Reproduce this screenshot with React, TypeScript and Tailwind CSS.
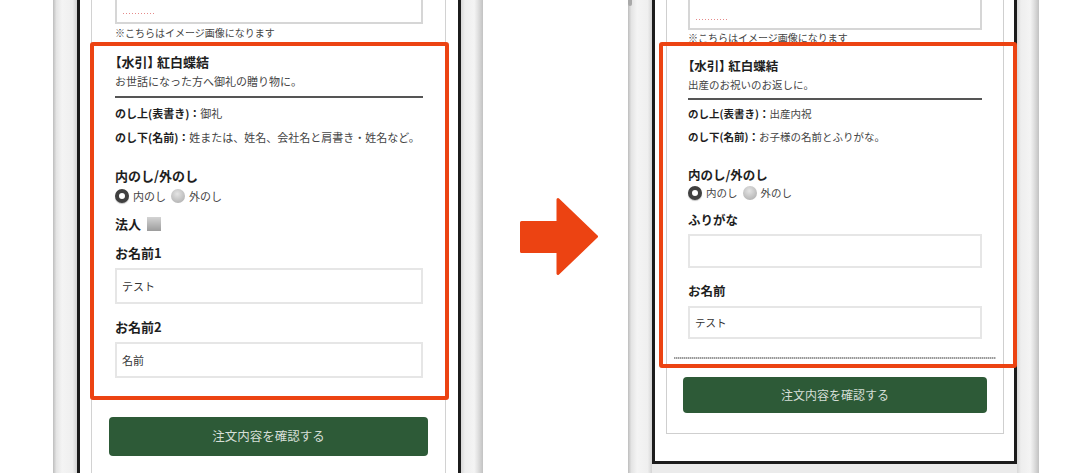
import React from "react";

const RED = "border-[#ec4312]";

function Radio({ checked }: { checked?: boolean }) {
  return checked ? (
    <span className="box-border inline-block h-[14px] w-[14px] shrink-0 rounded-full border-[4px] border-[#404040] bg-white shadow-[0_1px_1px_rgba(0,0,0,0.25)]" />
  ) : (
    <span className="inline-block h-[14px] w-[14px] shrink-0 rounded-full bg-[radial-gradient(circle_at_45%_35%,#e4e4e4,#a8a8a8)]" />
  );
}

function RadioRow({ size }: { size: string }) {
  return (
    <div className={`flex h-[16px] items-center gap-[4px] leading-[16px] text-[#444] ${size}`}>
      <Radio checked />
      <span className="mr-[1px]">内のし</span>
      <Radio />
      <span>外のし</span>
    </div>
  );
}

function Field({ value, h }: { value?: string; h: string }) {
  return (
    <div className={`flex items-center border-2 border-[#e6e6e6] bg-white pl-[5px] text-[#333] ${h}`}>
      {value}
    </div>
  );
}

function SideBezel({ side, knob }: { side: "l" | "r"; knob?: boolean }) {
  return side === "l" ? (
    <div className="relative h-full w-[24px] shrink-0 bg-[linear-gradient(to_right,#bdbdbd,#e4e4e4_14%,#f4f4f4_38%,#efefef_82%,#d4d4d4)]">
      {knob && <div className="absolute left-0 top-0 h-[6px] w-[4px] rounded-b-[2px] bg-[#a9a9a9]" />}
    </div>
  ) : (
    <div className="h-full w-[22px] shrink-0 bg-[linear-gradient(to_right,#d8d8d8,#eeeeee_18%,#f4f4f4_60%,#e2e2e2_76%,#c2c2c2)]" />
  );
}

// small pink dotted stroke shown inside the preview image frame
function PinkDots({ w }: { w: string }) {
  return <div className={`h-[1px] bg-[repeating-linear-gradient(to_right,#e58a8a_0_1px,transparent_1px_3px)] ${w}`} />;
}

function LeftPhone() {
  return (
    <div className="ml-[53px] flex h-[473px] w-[430px] shrink-0 items-start">
      <SideBezel side="l" />
      <div className="relative h-[520px] w-[384px] shrink-0 border-x-[3px] border-[#1c1c1c] bg-white">
        <div className="ml-[11px] w-[355px] border-x border-[#d2d2d2] pb-[60px]">
          <div className="pl-[23px] pr-[22px] text-[11px]">
            <div className="h-[24px] border-x-2 border-b-2 border-[#d6d6d6] pl-[6px] pt-[13px]">
              <PinkDots w="w-[33px]" />
            </div>
            <div className="mt-[3px] h-[12px] text-[10px] leading-[12px] text-[#444]">※こちらはイメージ画像になります</div>
            <div className="mt-[14px] h-[18px] text-[13px] font-bold leading-[18px] text-[#1e1e1e] [font-feature-settings:'palt']">【水引】 紅白蝶結</div>
            <div className="mt-[2px] h-[16px] leading-[16px] text-[#444]">お世話になった方へ御礼の贈り物に。</div>
            <div className="mt-[7px] h-[2px] bg-[#555]" />
            <div className="mt-[7px] h-[16px] leading-[16px] text-[#444]">
              <span className="font-bold text-[#1e1e1e]">のし上(表書き)：</span>御礼
            </div>
            <div className="mt-[8px] h-[16px] leading-[16px] text-[#444]">
              <span className="font-bold text-[#1e1e1e]">のし下(名前)：</span>姓または、姓名、会社名と肩書き・姓名など。
            </div>
            <div className="mt-[22px] h-[18px] text-[13px] font-bold leading-[18px] text-[#1e1e1e]">内のし/外のし</div>
            <div className="mt-[3px]">
              <RadioRow size="text-[11px]" />
            </div>
            <div className="mt-[11px] flex h-[18px] items-center gap-[6px] text-[13px] font-bold leading-[18px] text-[#1e1e1e]">
              法人
              <span className="inline-block h-[14px] w-[14px] bg-[linear-gradient(#d4d4d4,#9c9c9c)]" />
            </div>
            <div className="mt-[11px] h-[18px] text-[13px] font-bold leading-[18px] text-[#1e1e1e]">お名前1</div>
            <div className="mt-[6px]">
              <Field value="テスト" h="h-[36px]" />
            </div>
            <div className="mt-[14px] h-[18px] text-[13px] font-bold leading-[18px] text-[#1e1e1e]">お名前2</div>
            <div className="mt-[6px]">
              <Field value="名前" h="h-[36px]" />
            </div>
          </div>
          <div className="mx-[17px] mt-[39px] flex h-[39px] items-center justify-center rounded-[4px] bg-[#2d5a37] text-[12.5px] text-[#d6dfd7]">
            注文内容を確認する
          </div>
        </div>
        <div className={`absolute left-[10px] top-[42px] h-[358px] w-[359px] rounded-[3px] border-4 ${RED}`} />
      </div>
      <SideBezel side="r" />
    </div>
  );
}

function RightPhone() {
  return (
    <div className="flex h-[473px] w-[410px] shrink-0 items-start bg-[#ebebeb]">
      <SideBezel side="l" knob />
      <div className="relative h-[464px] w-[365px] shrink-0 border-x-[3px] border-b-[3px] border-[#1c1c1c] bg-white">
        <div className="ml-[11px] w-[338px] border-x border-b border-[#cfcfcf] pb-[20px]">
          <div className="pl-[21px] pr-[21px] text-[10.5px]">
            <div className="h-[30px] border-x-2 border-b-2 border-[#d6d6d6] pl-[6px] pt-[19px]">
              <PinkDots w="w-[32px]" />
            </div>
            <div className="mt-[2px] h-[12px] text-[10px] leading-[12px] text-[#444]">※こちらはイメージ画像になります</div>
            <div className="mt-[13px] h-[18px] text-[12.5px] font-bold leading-[18px] text-[#1e1e1e] [font-feature-settings:'palt']">【水引】 紅白蝶結</div>
            <div className="mt-[2px] h-[16px] leading-[16px] text-[#444]">出産のお祝いのお返しに。</div>
            <div className="mt-[5px] h-[2px] bg-[#555]" />
            <div className="mt-[6px] h-[16px] leading-[16px] text-[#444]">
              <span className="font-bold text-[#1e1e1e]">のし上(表書き)：</span>出産内祝
            </div>
            <div className="mt-[7px] h-[16px] leading-[16px] text-[#444]">
              <span className="font-bold text-[#1e1e1e]">のし下(名前)：</span>お子様の名前とふりがな。
            </div>
            <div className="mt-[21px] h-[18px] text-[12.5px] font-bold leading-[18px] text-[#1e1e1e]">内のし/外のし</div>
            <div className="mt-[1px]">
              <RadioRow size="text-[10.5px]" />
            </div>
            <div className="mt-[10px] h-[18px] text-[12.5px] font-bold leading-[18px] text-[#1e1e1e]">ふりがな</div>
            <div className="mt-[5px]">
              <Field h="h-[34px]" />
            </div>
            <div className="mt-[14px] h-[18px] text-[12.5px] font-bold leading-[18px] text-[#1e1e1e]">お名前</div>
            <div className="mt-[6px]">
              <Field value="テスト" h="h-[33px]" />
            </div>
          </div>
          <div className="ml-[7px] mt-[18px] h-[2px] w-[322px] bg-[repeating-linear-gradient(to_right,#9a9a9a_0_1px,#d0d0d0_1px_2px)]" />
          <div className="ml-[16px] mt-[18px] flex h-[36px] w-[304px] items-center justify-center rounded-[4px] bg-[#2d5a37] text-[12px] text-[#d6dfd7]">
            注文内容を確認する
          </div>
        </div>
        <div className={`absolute left-[4px] top-[42px] h-[326px] w-[358px] rounded-[3px] border-4 ${RED}`} />
      </div>
      <SideBezel side="r" />
    </div>
  );
}

export default function App() {
  return (
    <div className="flex h-[473px] w-[1081px] overflow-hidden bg-white font-['Noto_Sans_CJK_JP','Noto_Sans',sans-serif]">
      <LeftPhone />
      <div className="w-[145px] shrink-0">
        <svg className="ml-[37px] mt-[198px]" width="78" height="77" viewBox="0 0 78 77">
          <path
            d="M1.5 24.5 H38 V1.5 L76.5 38.5 L38 75.5 V53.5 H1.5 Z"
            fill="#ec4312"
            stroke="#ec4312"
            strokeWidth="3"
            strokeLinejoin="round"
          />
        </svg>
      </div>
      <RightPhone />
    </div>
  );
}
